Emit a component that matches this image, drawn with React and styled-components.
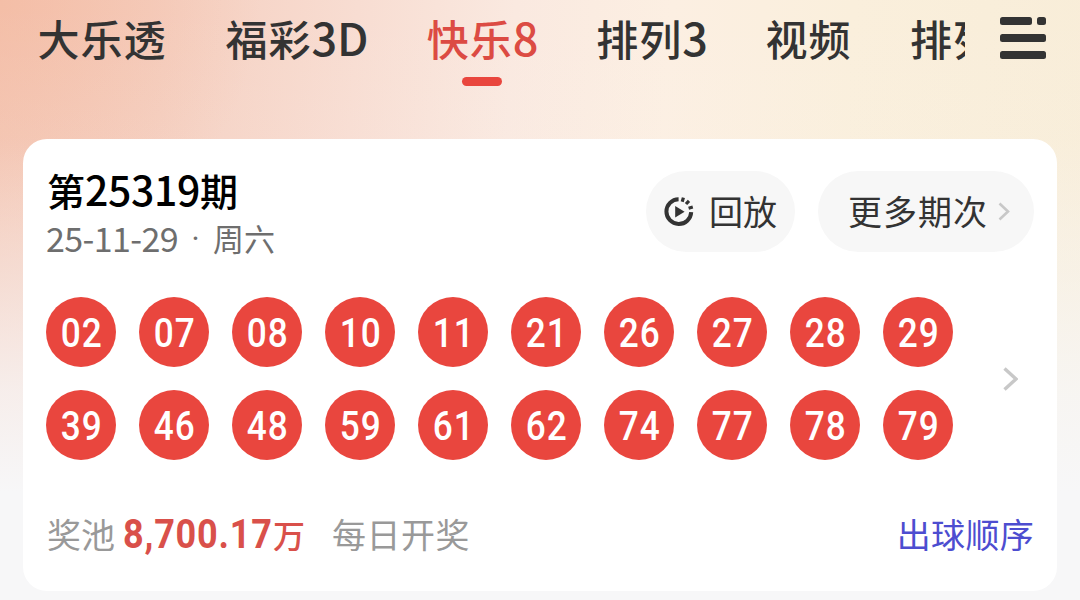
import React, { useState } from "react";
import styled, { createGlobalStyle } from "styled-components";

const GlobalStyle = createGlobalStyle`
  * {
    box-sizing: border-box;
  }

  body {
    margin: 0;
    font-family: "Noto Sans CJK SC", sans-serif;
    color: #333;
  }

  button {
    border: none;
    padding: 0;
    background: none;
    font: inherit;
    color: inherit;
    cursor: pointer;
  }
`;

const Page = styled.div`
  height: 600px;
  overflow: hidden;
  background:
    linear-gradient(180deg, rgba(247, 247, 248, 0) 0%, rgba(247, 247, 248, 0.06) 23%, rgba(247, 247, 248, 0.42) 45%, rgba(247, 247, 248, 0.8) 65%, #f7f7f8 82%),
    radial-gradient(circle at 0 0, rgba(244, 182, 154, 0.5) 0, rgba(244, 182, 154, 0) 260px),
    linear-gradient(94deg, #f4c6b4 0%, #f5cfc0 15%, #f8ddd2 32%, #fae9e0 46%, #fcefe2 60%, #faefdc 76%, #f8edd8 100%);
`;

const Header = styled.header`
  display: flex;
  height: 139px;
`;

const Tabs = styled.nav`
  display: flex;
  align-items: flex-start;
  gap: 60px;
  width: 965px;
  padding-left: 38px;
  overflow: hidden;
`;

const Tab = styled.button`
  display: flex;
  flex-direction: column;
  align-items: center;
  flex-shrink: 0;
  width: ${(props) => props.$width}px;
  padding-top: 8px;
  font-size: 42px;
  font-weight: 500;
  line-height: 60px;
  letter-spacing: 1px;
  white-space: nowrap;
  color: ${(props) => (props.$active ? "#dc4b43" : "#333")};

  &::after {
    content: "";
    width: 40px;
    height: 9px;
    margin: 9px 2px 0 0;
    border-radius: 5px;
    background: ${(props) => (props.$active ? "#e9463e" : "transparent")};
  }
`;

const TabLatin = styled.span`
  font-size: 45px;
  line-height: 0;
  letter-spacing: 0;
`;

const MenuButton = styled.button`
  width: 46px;
  height: 44px;
  margin: 16px 0 0 35px;

  svg {
    display: block;
  }
`;

const Card = styled.main`
  width: 1034px;
  height: 452px;
  margin-left: 23px;
  padding: 32px 23px 0;
  border-radius: 24px;
  background: #fff;
`;

const CardHead = styled.div`
  display: flex;
  justify-content: space-between;
  height: 126px;
`;

const Issue = styled.h1`
  margin: -7px 0 0 1px;
  font-size: 38px;
  font-weight: 500;
  line-height: 52px;
  color: #000;
`;

const IssueNumber = styled.span`
  font-size: 41px;
  line-height: 0;
  letter-spacing: -0.4px;
`;

const DrawDate = styled.p`
  display: flex;
  margin: 1px 0 0;
  font-size: 31px;
  line-height: 42px;
  color: #6e6e6e;
`;

const DateNumber = styled.span`
  font-size: 34px;
  letter-spacing: -0.6px;
`;

const Dot = styled.span`
  width: 35px;
  padding-top: 2px;
  font-family: Roboto, sans-serif;
  text-align: center;
`;

const Actions = styled.div`
  display: flex;
  gap: 23px;
`;

const Pill = styled.button`
  display: flex;
  align-items: center;
  gap: ${(props) => props.$gap}px;
  width: ${(props) => props.$width}px;
  height: 81px;
  padding-left: ${(props) => props.$indent}px;
  border-radius: 41px;
  background: #f7f7f7;
  font-size: 34px;
  letter-spacing: ${(props) => props.$spacing || 0}px;
  white-space: nowrap;

  svg {
    flex-shrink: 0;
  }
`;

const PillLabel = styled.span`
  padding-bottom: 3px;
`;

const Draw = styled.section`
  display: flex;
  align-items: center;
  justify-content: space-between;
  padding-right: 16px;
`;

const Balls = styled.div`
  display: grid;
  grid-template-columns: repeat(10, 70px);
  gap: 23px;
`;

const Ball = styled.span`
  display: flex;
  align-items: center;
  justify-content: center;
  height: 70px;
  padding-top: 2px;
  border-radius: 50%;
  background: #e9463e;
  font-family: Roboto, sans-serif;
  font-size: 40px;
  font-weight: 500;
  color: #fff;
`;

const BallNumber = styled.span`
  padding-left: 1px;
  letter-spacing: 1px;
  transform: scaleX(0.88);
`;

const CardFoot = styled.footer`
  display: flex;
  align-items: center;
  height: 50px;
  margin-top: 49px;
  padding-left: 1px;
  font-size: 34px;
  line-height: 50px;
  color: #999;
  white-space: nowrap;
`;

const Pool = styled.strong`
  display: flex;
  align-items: center;
  margin: 0 27px 0 8px;
  font-size: 32px;
  font-weight: 500;
  color: #d9504a;
`;

const PoolNumber = styled.span`
  width: 150px;
  padding-top: 2px;
  font-family: Roboto, sans-serif;
  font-size: 40px;
  font-weight: 700;
  letter-spacing: 0.9px;
  transform: scaleX(0.9);
  transform-origin: left;
`;

const Schedule = styled.span`
  letter-spacing: 0.5px;
`;

const OrderLink = styled.button`
  margin-left: auto;
  letter-spacing: 0.3px;
  color: #4d4dd0;
`;

const MenuIcon = () => (
  <svg width="46" height="44" viewBox="0 0 46 44" fill="#333">
    <rect x="0" y="1" width="32" height="8" rx="2.5" />
    <rect x="37" y="1" width="9" height="8" rx="2.5" />
    <rect x="0" y="18" width="46" height="8" rx="2.5" />
    <rect x="0" y="35" width="46" height="8" rx="2.5" />
  </svg>
);

const ReplayIcon = () => (
  <svg width="30" height="30" viewBox="0 0 30 30" fill="none" stroke="#333">
    <path d="M14.6 2.2A12.4 12.4 0 1 0 27.2 15.2" strokeWidth="4" />
    <path d="M19.4 0.6L18.2 4.8M25 3.8L22 7M28.8 10L24.6 11.2" strokeWidth="3.2" />
    <path d="M11.2 9V20.4L20.6 14.7Z" fill="#333" stroke="none" />
  </svg>
);

const Chevron = ({ width, height, stroke }) => (
  <svg width={width} height={height} viewBox={`0 0 ${width} ${height}`} fill="none">
    <path
      d={`M1.5 1.5L${width - 2} ${height / 2}L1.5 ${height - 1.5}`}
      stroke="#c8c8c8"
      strokeWidth={stroke}
    />
  </svg>
);

const tabs = [
  { id: "dlt", name: "大乐透", width: 128 },
  { id: "fc3d", name: "福彩", latin: "3D", width: 142 },
  { id: "kl8", name: "快乐", latin: "8", width: 109 },
  { id: "pl3", name: "排列", latin: "3", width: 110 },
  { id: "video", name: "视频", width: 83 },
  { id: "pl", name: "排列", width: 86 },
];

const numbers = [
  "02", "07", "08", "10", "11", "21", "26", "27", "28", "29",
  "39", "46", "48", "59", "61", "62", "74", "77", "78", "79",
];

const App = () => {
  const [activeTab, setActiveTab] = useState("kl8");

  return (
    <Page>
      <GlobalStyle />
      <Header>
        <Tabs>
          {tabs.map((tab) => (
            <Tab
              key={tab.id}
              $width={tab.width}
              $active={tab.id === activeTab}
              onClick={() => setActiveTab(tab.id)}
            >
              <span>
                {tab.name}
                {tab.latin && <TabLatin>{tab.latin}</TabLatin>}
              </span>
            </Tab>
          ))}
        </Tabs>
        <MenuButton>
          <MenuIcon />
        </MenuButton>
      </Header>
      <Card>
        <CardHead>
          <div>
            <Issue>
              第<IssueNumber>25319</IssueNumber>期
            </Issue>
            <DrawDate>
              <DateNumber>25-11-29</DateNumber>
              <Dot>·</Dot>
              <span>周六</span>
            </DrawDate>
          </div>
          <Actions>
            <Pill $width={149} $indent={18} $gap={15}>
              <ReplayIcon />
              <PillLabel>回放</PillLabel>
            </Pill>
            <Pill $width={216} $indent={30} $gap={10} $spacing={1}>
              <PillLabel>更多期次</PillLabel>
              <Chevron width={12} height={19} stroke={2.6} />
            </Pill>
          </Actions>
        </CardHead>
        <Draw>
          <Balls>
            {numbers.map((number) => (
              <Ball key={number}>
                <BallNumber>{number}</BallNumber>
              </Ball>
            ))}
          </Balls>
          <Chevron width={15} height={24} stroke={3.4} />
        </Draw>
        <CardFoot>
          <span>奖池</span>
          <Pool>
            <PoolNumber>8,700.17</PoolNumber>
            <span>万</span>
          </Pool>
          <Schedule>每日开奖</Schedule>
          <OrderLink>出球顺序</OrderLink>
        </CardFoot>
      </Card>
    </Page>
  );
};

export default App;
